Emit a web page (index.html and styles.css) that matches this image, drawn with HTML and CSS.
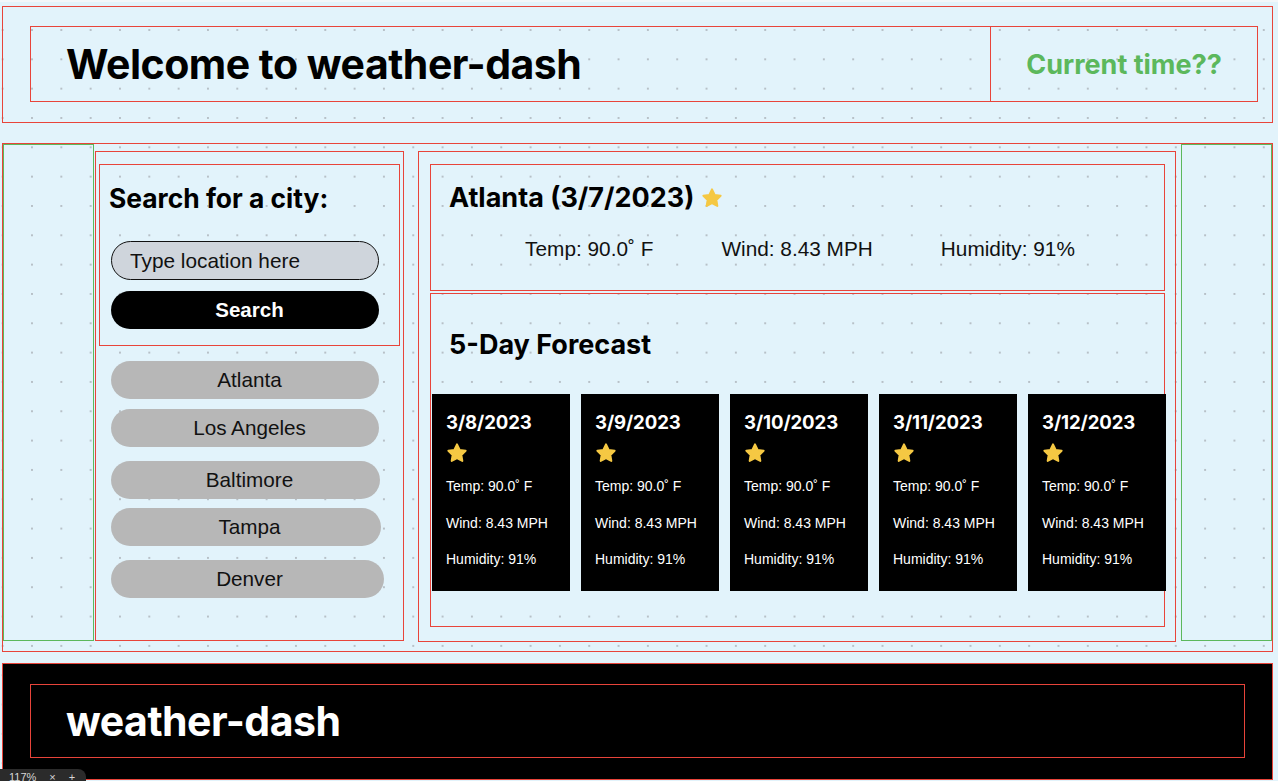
FILE: index.html
```html
<!DOCTYPE html>
<html lang="en">
<head>
<meta charset="utf-8">
<title>weather-dash</title>
<link rel="stylesheet" href="styles.css">
</head>
<body>
<div class="page">
  <header class="top">
    <div class="top-inner">
      <div class="title-cell"><h1 class="site-title">Welcome to weather-dash</h1></div>
      <div class="time-cell"><span class="clock">Current time??</span></div>
    </div>
  </header>

  <main class="main">
    <div class="gutter"></div>

    <aside class="sidebar">
      <form class="search">
        <h2 class="heading search-title">Search for a city:</h2>
        <input class="search-input" type="text" placeholder="Type location here">
        <button class="search-btn" type="button">Search</button>
      </form>
      <ul class="cities">
        <li><button class="city city-1" type="button">Atlanta</button></li>
        <li><button class="city city-2" type="button">Los Angeles</button></li>
        <li><button class="city city-3" type="button">Baltimore</button></li>
        <li><button class="city city-4" type="button">Tampa</button></li>
        <li><button class="city city-5" type="button">Denver</button></li>
      </ul>
    </aside>

    <section class="panel">
      <div class="today">
        <h2 class="heading today-title">Atlanta (3/7/2023)
          <svg class="star" viewBox="0 0 24 24" aria-hidden="true"><polygon points="12,2.6 14.9,8.6 21.4,9.5 16.7,14.1 17.8,20.6 12,17.5 6.2,20.6 7.3,14.1 2.6,9.5 9.1,8.6"/></svg>
        </h2>
        <div class="stats">
          <span>Temp: 90.0˚ F</span>
          <span>Wind: 8.43 MPH</span>
          <span>Humidity: 91%</span>
        </div>
      </div>

      <div class="forecast">
        <h2 class="heading forecast-title">5-Day Forecast</h2>
        <div class="cards">
          <div class="card">
            <h3 class="card-date">3/8/2023</h3>
            <svg class="star card-star" viewBox="0 0 24 24" aria-hidden="true"><polygon points="12,2.6 14.9,8.6 21.4,9.5 16.7,14.1 17.8,20.6 12,17.5 6.2,20.6 7.3,14.1 2.6,9.5 9.1,8.6"/></svg>
            <p>Temp: 90.0˚ F</p><p>Wind: 8.43 MPH</p><p>Humidity: 91%</p>
          </div>
          <div class="card">
            <h3 class="card-date">3/9/2023</h3>
            <svg class="star card-star" viewBox="0 0 24 24" aria-hidden="true"><polygon points="12,2.6 14.9,8.6 21.4,9.5 16.7,14.1 17.8,20.6 12,17.5 6.2,20.6 7.3,14.1 2.6,9.5 9.1,8.6"/></svg>
            <p>Temp: 90.0˚ F</p><p>Wind: 8.43 MPH</p><p>Humidity: 91%</p>
          </div>
          <div class="card">
            <h3 class="card-date">3/10/2023</h3>
            <svg class="star card-star" viewBox="0 0 24 24" aria-hidden="true"><polygon points="12,2.6 14.9,8.6 21.4,9.5 16.7,14.1 17.8,20.6 12,17.5 6.2,20.6 7.3,14.1 2.6,9.5 9.1,8.6"/></svg>
            <p>Temp: 90.0˚ F</p><p>Wind: 8.43 MPH</p><p>Humidity: 91%</p>
          </div>
          <div class="card">
            <h3 class="card-date">3/11/2023</h3>
            <svg class="star card-star" viewBox="0 0 24 24" aria-hidden="true"><polygon points="12,2.6 14.9,8.6 21.4,9.5 16.7,14.1 17.8,20.6 12,17.5 6.2,20.6 7.3,14.1 2.6,9.5 9.1,8.6"/></svg>
            <p>Temp: 90.0˚ F</p><p>Wind: 8.43 MPH</p><p>Humidity: 91%</p>
          </div>
          <div class="card">
            <h3 class="card-date">3/12/2023</h3>
            <svg class="star card-star" viewBox="0 0 24 24" aria-hidden="true"><polygon points="12,2.6 14.9,8.6 21.4,9.5 16.7,14.1 17.8,20.6 12,17.5 6.2,20.6 7.3,14.1 2.6,9.5 9.1,8.6"/></svg>
            <p>Temp: 90.0˚ F</p><p>Wind: 8.43 MPH</p><p>Humidity: 91%</p>
          </div>
        </div>
      </div>
    </section>

    <div class="gutter"></div>
  </main>

  <footer class="bottom">
    <div class="bottom-inner"><h2 class="footer-title">weather-dash</h2></div>
  </footer>
</div>

<div class="zoom-badge"><span>117%</span><span>×</span><span>+</span></div>
</body>
</html>
```

FILE: styles.css
```css
* { box-sizing: border-box; }

html, body { margin: 0; padding: 0; }

body {
  width: 1278px;
  height: 781px;
  overflow: hidden;
  position: relative;
  border-top: 2px solid #f2f7fa;
  background-color: #e2f3fb;
  background-image: radial-gradient(circle, #b7c0c7 0.9px, rgba(183, 192, 199, 0) 1.5px);
  background-size: 29.33px 29.33px;
  background-position: 17.33px 15.33px;
  background-origin: border-box;
  font-family: "Liberation Sans", Arial, sans-serif;
  color: #111;
}

.page { padding: 4px 5px 0 2px; }

/* ---------- header ---------- */
.top {
  height: 117px;
  border: 1px solid #e8443a;
  padding: 19px 14px 20px 27px;
}
.top-inner {
  display: flex;
  height: 76px;
  border: 1px solid #e8443a;
}
.title-cell {
  flex: 1;
  display: flex;
  align-items: center;
  padding-left: 35px;
}
.site-title {
  margin: 0;
  font: 700 41px/1 Inter, "Liberation Sans", sans-serif;
  letter-spacing: -0.5px;
  color: #000;
}
.time-cell {
  width: 267px;
  border-left: 1px solid #e8443a;
  display: flex;
  align-items: center;
  justify-content: center;
}
.clock {
  font: 700 27px/1 Inter, "Liberation Sans", sans-serif;
  color: #5cb85c;
}

/* ---------- main ---------- */
.main {
  margin-top: 20px;
  height: 509px;
  border: 1px solid #e8443a;
  display: flex;
  align-items: flex-start;
}
.gutter {
  flex-shrink: 0;
  width: 91px;
  height: 497px;
  border: 1px solid #5cb85c;
}

.heading {
  margin: 0;
  font: 700 27px/32px Inter, "Liberation Sans", sans-serif;
  color: #000;
}

/* sidebar */
.sidebar {
  flex-shrink: 0;
  width: 309px;
  height: 490px;
  margin: 7px 14px 0 1px;
  border: 1px solid #e8443a;
  padding: 12px 3px 0 3px;
}
.search {
  height: 182px;
  margin: 0;
  border: 1px solid #e8443a;
  padding: 17px 0 0 11px;
}
.search-title {
  margin-left: -2px;
  font-size: 26.4px;
}
.search-input {
  display: block;
  width: 268px;
  height: 39px;
  margin-top: 27px;
  border: 1px solid #111;
  border-radius: 20px;
  background: #cfd5dc;
  padding: 0 0 0 18px;
  font: 20.8px "Liberation Sans", Arial, sans-serif;
  color: #111;
  outline: none;
}
.search-input::placeholder { color: #111; opacity: 1; }
.search-btn {
  display: block;
  width: 268px;
  height: 38px;
  margin-top: 11px;
  border: 0;
  border-radius: 19px;
  background: #000;
  color: #fff;
  padding: 0 0 0 9px;
  font: 700 20.5px "Liberation Sans", Arial, sans-serif;
}

.cities {
  list-style: none;
  margin: 15px 0 0 12px;
  padding: 0;
}
.city {
  display: block;
  width: 268px;
  height: 38px;
  border: 0;
  border-radius: 19px;
  background: #b7b7b7;
  color: #111;
  padding: 0 0 0 9px;
  font: 20.7px "Liberation Sans", Arial, sans-serif;
}
.city-2 { margin-top: 10px; }
.city-3 { margin-top: 14px; width: 269px; padding-right: 1px; }
.city-4 { margin-top: 9px; width: 270px; padding-right: 2px; }
.city-5 { margin-top: 14px; width: 273px; padding-right: 5px; }

/* panel */
.panel {
  flex-shrink: 0;
  width: 758px;
  height: 491px;
  margin: 7px 5px 0 0;
  border: 1px solid #e8443a;
  padding: 12px 10px 0 11px;
}
.today {
  height: 127px;
  border: 1px solid #e8443a;
  padding: 17px 0 0 18px;
}
.today-title {
  display: flex;
  align-items: center;
  gap: 7px;
}
.star {
  width: 22px;
  height: 22px;
  fill: #f5c843;
  stroke: #f5c843;
  stroke-width: 2.2;
  stroke-linejoin: round;
}
.stats {
  display: flex;
  justify-content: center;
  gap: 68px;
  margin: 23px 0 0 -13px;
  font: 20.8px/24px "Liberation Sans", Arial, sans-serif;
  color: #111;
}

.forecast {
  margin-top: 2px;
  height: 334px;
  border: 1px solid #e8443a;
  padding-top: 35px;
}
.forecast-title { padding-left: 18px; }
.cards {
  display: flex;
  gap: 11px;
  margin: 33px 0 0 1px;
}
.card {
  flex-shrink: 0;
  width: 138px;
  height: 197px;
  background: #000;
  color: #fff;
  padding: 17px 0 0 14px;
}
.card-date {
  margin: 0;
  font: 700 18.6px/22px Inter, "Liberation Sans", sans-serif;
  letter-spacing: -0.1px;
}
.card-star {
  display: block;
  margin: 9px 0 0 0;
}
.card p {
  margin: 19.5px 0 0;
  font: 14px/17px "Liberation Sans", Arial, sans-serif;
}
.card .card-star + p { margin-top: 14px; }

/* ---------- footer ---------- */
.bottom {
  margin-top: 11px;
  height: 117px;
  border: 1px solid #e8443a;
  background: #000;
  padding: 20px 27px 21px 27px;
}
.bottom-inner {
  height: 74px;
  border: 1px solid #e8443a;
  display: flex;
  align-items: center;
  padding-left: 35px;
}
.footer-title {
  margin: 0;
  font: 700 41px/1 Inter, "Liberation Sans", sans-serif;
  letter-spacing: -0.5px;
  color: #fff;
}

/* canvas zoom indicator */
.zoom-badge {
  position: absolute;
  left: 0;
  top: 767px;
  width: 86px;
  height: 14px;
  background: #2b2b2b;
  border-radius: 0 8px 0 0;
  display: flex;
  gap: 13px;
  padding: 2px 0 0 9px;
  font: 11px/12px "Liberation Sans", Arial, sans-serif;
  color: #d6d6d6;
}
```
